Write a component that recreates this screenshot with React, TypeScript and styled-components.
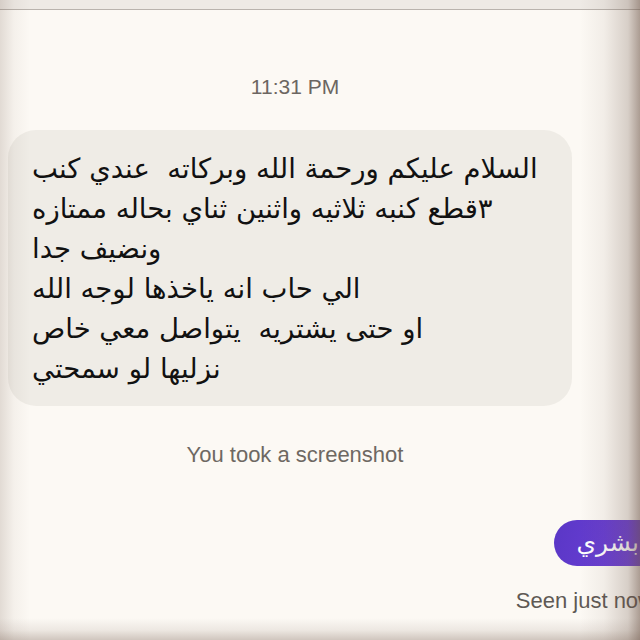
import * as React from 'react'
import styled, { createGlobalStyle } from 'styled-components'

const GlobalStyle = createGlobalStyle`
    html, body {
        margin: 0;
        padding: 0;
        background: #fcf9f4;
        overflow: hidden;
    }
`

const lines = [
    'السلام عليكم ورحمة الله وبركاته  عندي كنب',
    '٣قطع كنبه ثلاثيه واثنين ثناي بحاله ممتازه',
    'ونضيف جدا',
    'الي حاب انه ياخذها لوجه الله',
    'او حتى يشتريه  يتواصل معي خاص',
    'نزليها لو سمحتي',
]

export default function App() {
    return (
        <Screen>
            <GlobalStyle />
            <TopBar />
            <Thread>
                <Timestamp>11:31 PM</Timestamp>
                <IncomingBubble>
                    {lines.map((line, index) =>
                        <BubbleLine key={index} dir="rtl">{line}</BubbleLine>
                    )}
                </IncomingBubble>
                <Notice>You took a screenshot</Notice>
                <OutgoingColumn>
                    <OutgoingBubble dir="rtl">ابشري</OutgoingBubble>
                    <Seen>Seen just now</Seen>
                </OutgoingColumn>
            </Thread>
            <Vignette />
        </Screen>
    )
}

const Screen = styled.div`
    position: relative;
    width: 640px;
    height: 640px;
    overflow: hidden;
    background: #fcf9f4;
    font-family: 'Liberation Sans', Arial, sans-serif;
`

// photo shading over the edges of the screenshot
const Vignette = styled.div`
    position: absolute;
    inset: 0;
    pointer-events: none;
    background:
        linear-gradient(to left, rgba(105, 80, 66, 0.55) 0px, rgba(105, 80, 66, 0.25) 12px, rgba(105, 80, 66, 0.07) 36px, rgba(105, 80, 66, 0) 60px),
        linear-gradient(to right, rgba(105, 80, 66, 0.18) 0px, rgba(105, 80, 66, 0.05) 14px, rgba(105, 80, 66, 0) 30px),
        linear-gradient(to top, rgba(105, 80, 66, 0.3) 0px, rgba(105, 80, 66, 0.1) 10px, rgba(105, 80, 66, 0) 22px);
`

const TopBar = styled.div`
    height: 9px;
    background: #eeeae5;
    border-bottom: 1px solid #b9b3ad;
`

const Thread = styled.div`
    display: flex;
    flex-direction: column;
`

const Timestamp = styled.div`
    margin-top: 65px;
    padding-right: 50px;
    height: 24px;
    line-height: 24px;
    text-align: center;
    font-size: 21px;
    color: #6c6661;
`

const IncomingBubble = styled.div`
    margin: 31px 0 0 8px;
    width: 564px;
    box-sizing: border-box;
    padding: 18px 24px;
    border-radius: 28px;
    background: #efece6;
    font-family: 'DejaVu Sans', sans-serif;
    font-size: 27.5px;
    line-height: 40px;
    color: #111;
`

const BubbleLine = styled.div`
    display: flex;
    justify-content: flex-end;
    white-space: pre;
`

const Notice = styled.div`
    margin-top: 36px;
    padding-right: 50px;
    height: 26px;
    line-height: 26px;
    text-align: center;
    font-size: 22px;
    color: #6e6862;
`

const OutgoingColumn = styled.div`
    display: flex;
    flex-direction: column;
    align-items: flex-end;
    margin-top: 52px;
`

const OutgoingBubble = styled.div`
    margin-right: -28px;
    height: 46px;
    line-height: 46px;
    padding: 0 22px;
    border-radius: 23px;
    background: linear-gradient(100deg, #5a37c6, #6b3fd6 60%, #7a4ade);
    color: #fff;
    font-family: 'DejaVu Sans', sans-serif;
    font-size: 25px;
`

const Seen = styled.div`
    margin-right: -14px;
    margin-top: 22px;
    height: 26px;
    line-height: 26px;
    font-size: 22px;
    color: #5f5954;
`
